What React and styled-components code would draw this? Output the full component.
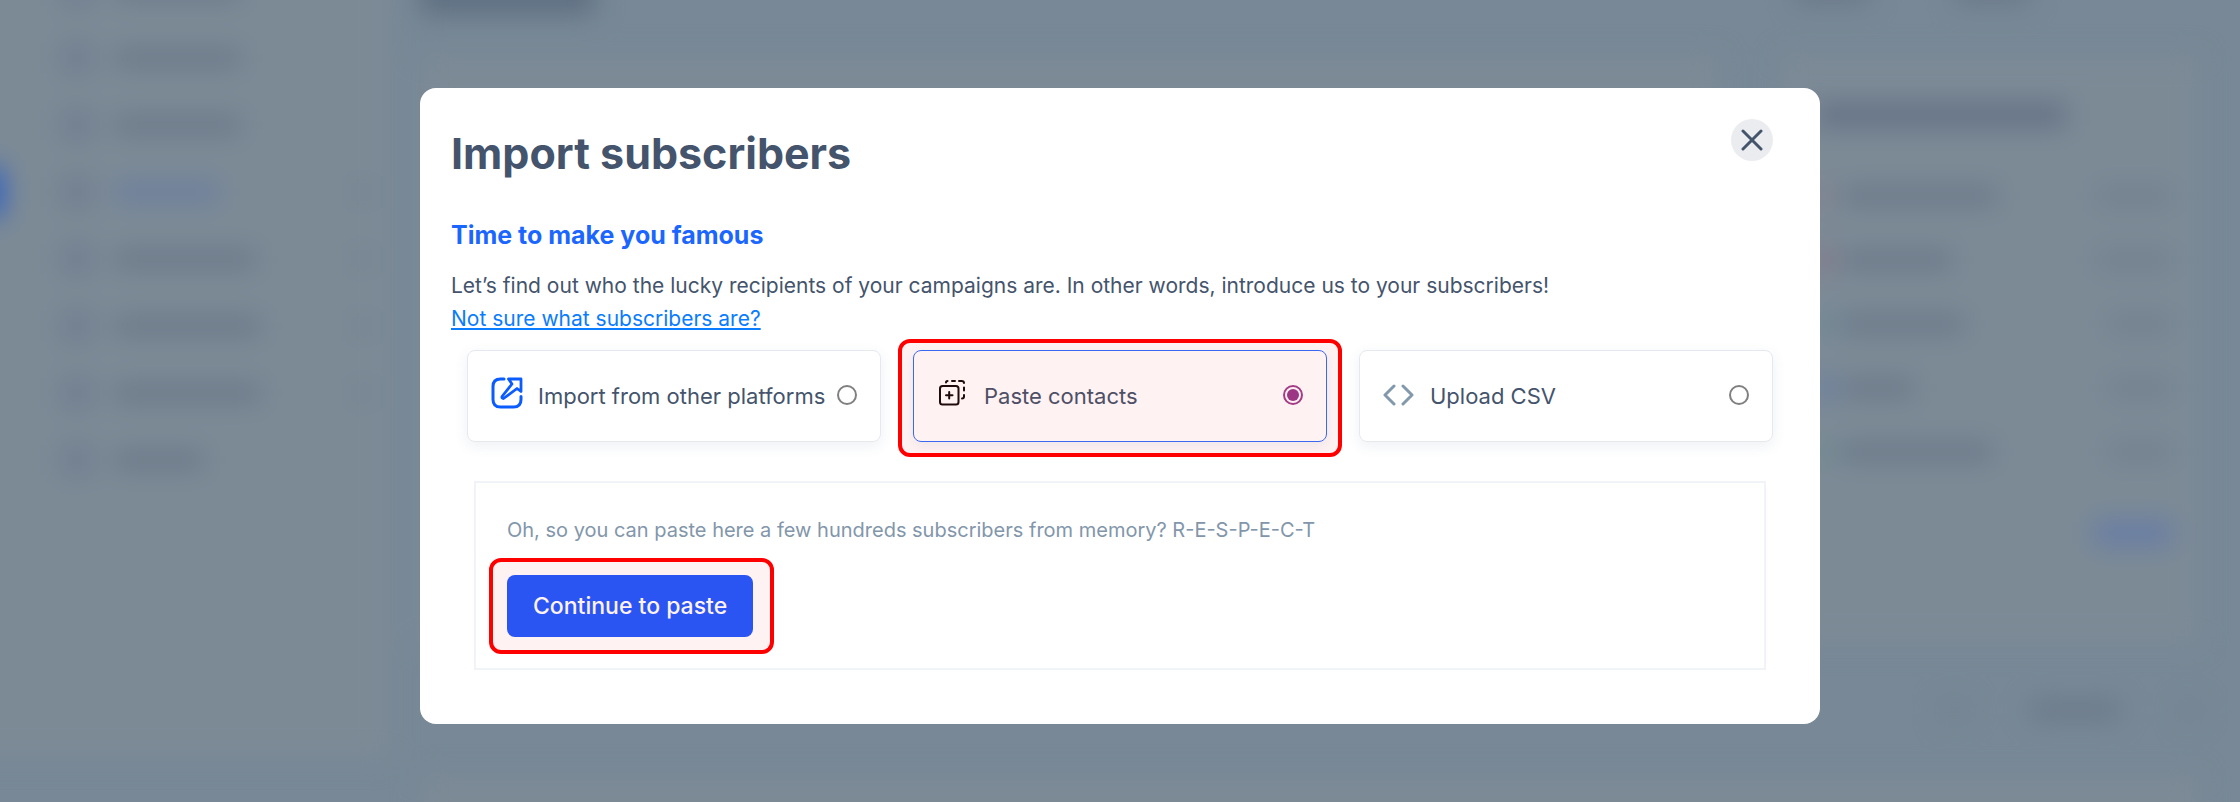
import { useState } from "react";
import styled, { createGlobalStyle } from "styled-components";

const menu = [
  { id: 1, width: 125 },
  { id: 2, width: 125 },
  { id: 3, width: 125 },
  { id: 4, width: 103, active: true, arrow: true },
  { id: 5, width: 140, arrow: true },
  { id: 6, width: 145, arrow: true },
  { id: 7, width: 145, arrow: true },
  { id: 8, width: 88 },
];

const stats = [
  { id: 1, color: "#85808a", width: 155, count: 76 },
  { id: 2, color: "#8c6f80", width: 110, count: 76 },
  { id: 3, color: "#6a8795", width: 122, count: 64 },
  { id: 4, color: "#6278a6", width: 72, count: 64 },
  { id: 5, color: "#6a8a8d", width: 150, count: 64 },
];

const ImportIcon = () => (
  <svg
    width="32"
    height="32"
    viewBox="0 0 32 32"
    fill="none"
    stroke="#0b5cff"
    strokeWidth="3"
    strokeLinecap="round"
    strokeLinejoin="round"
  >
    <path d="M13 2H9.500Q2 2 2 9.500V22.500Q2 30 9.500 30H22.500Q30 30 30 22.500V19.500" />
    <path d="M17.500 2H30V14.500L26 11.500L12.500 21.500Q10.500 21.500 11 19.500L21 7Z" strokeWidth="2.800" />
  </svg>
);

const PasteIcon = () => (
  <svg width="32" height="32" viewBox="0 0 32 32" fill="none" stroke="#140c0c" strokeWidth="2" strokeLinecap="round">
    <rect x="3" y="9" width="18.500" height="18.500" rx="2.500" />
    <path d="M12.200 15v6.500M9 18.200h6.500" />
    <path d="M9 5.500Q9 4 10.500 4M15 4h3M22 4h2.500Q27 4 27 6M27 10.500v3M27 18v1.500Q27 21.500 25 21.500" />
  </svg>
);

const CodeIcon = () => (
  <svg
    width="32"
    height="32"
    viewBox="0 0 32 32"
    fill="none"
    stroke="#8299ad"
    strokeWidth="3"
    strokeLinecap="round"
    strokeLinejoin="round"
  >
    <path d="M11 9L2 18L11 27M20 9L29 18L20 27" />
  </svg>
);

const options = [
  { id: "platforms", label: "Import from other platforms", icon: <ImportIcon /> },
  { id: "paste", label: "Paste contacts", icon: <PasteIcon /> },
  { id: "csv", label: "Upload CSV", icon: <CodeIcon /> },
];

const Background = () => (
  <Backdrop aria-hidden="true">
    <Sidebar>
      {menu.map(item => (
        <MenuItem key={item.id}>
          <Marker $active={item.active} />
          <MenuIcon />
          <Bar $width={item.width} $color={item.active && "#6b7d9e"} />
          {item.arrow && <Arrow />}
        </MenuItem>
      ))}
    </Sidebar>
    <Main>
      <TopBar>
        <Bar $width={175} $height={40} $color="#5f7082" />
        <Actions>
          <Bar $width={75} $height={28} />
          <Bar $width={75} $height={28} />
        </Actions>
      </TopBar>
      <Columns>
        <Card />
        <Card>
          <Bar $width={250} $height={24} $color="#637185" />
          {stats.map(stat => (
            <Stat key={stat.id}>
              <Bar $width={16} $color={stat.color} />
              <Bar $width={stat.width} />
              <Count $width={stat.count} $color="#728090" />
            </Stat>
          ))}
          <Stat>
            <Count $width={78} $height={24} $color="#667ca5" />
          </Stat>
        </Card>
      </Columns>
      <Pager>
        <Bar $width={30} $color="#748290" />
        <Bar $width={90} />
        <Bar $width={20} $color="#748290" />
      </Pager>
      <Card />
    </Main>
  </Backdrop>
);

const App = () => {
  const [selected, setSelected] = useState("paste");

  return (
    <Page>
      <GlobalStyle />
      <Background />
      <Modal role="dialog" aria-modal="true" aria-labelledby="modal-title">
        <Header>
          <h1 id="modal-title">Import subscribers</h1>
          <CloseButton type="button" aria-label="Close">
            <svg width="22" height="22" viewBox="0 0 22 22" stroke="#44546c" strokeWidth="3" strokeLinecap="round">
              <path d="M2 2L20 20M20 2L2 20" />
            </svg>
          </CloseButton>
        </Header>
        <Intro>
          <h2>Time to make you famous</h2>
          <p>
            Let’s find out who the lucky recipients of your campaigns are. In other words, introduce us to your
            subscribers!
          </p>
          <a href="#subscribers">Not sure what subscribers are?</a>
        </Intro>
        <Options>
          {options.map(option => (
            <Option key={option.id} $selected={selected === option.id}>
              {option.icon}
              <span>{option.label}</span>
              <input
                type="radio"
                name="import-type"
                value={option.id}
                checked={selected === option.id}
                onChange={() => setSelected(option.id)}
              />
              {option.id === "paste" && <OptionHighlight />}
            </Option>
          ))}
        </Options>
        <Panel>
          <p>Oh, so you can paste here a few hundreds subscribers from memory? R-E-S-P-E-C-T</p>
          <ButtonWrapper>
            <Continue type="button">Continue to paste</Continue>
            <ButtonHighlight />
          </ButtonWrapper>
        </Panel>
      </Modal>
    </Page>
  );
};

export default App;

/* ---------------------------- Styled Components --------------------------- */

const GlobalStyle = createGlobalStyle`
  * {
    box-sizing: border-box;
  }

  body {
    margin: 0;
    font-family: Inter, "Open Sans", sans-serif;
    color: #44546c;
  }

  h1, h2, p {
    margin: 0;
  }
`;

const Page = styled.div`
  position: relative;
  min-height: 100vh;
  padding: 88px 32px 77px;
  overflow: hidden;
  background: #788896;
`;

/* the blurred app that lies under the dialog */
const Backdrop = styled.div`
  position: absolute;
  inset: 0;
  display: flex;
  filter: blur(13px);
`;

const Sidebar = styled.div`
  flex: none;
  width: 390px;
  height: 802px;
  margin-top: -43px;
  background: #7c8a96;
  box-shadow: -60px 0 0 #7c8a96;
`;

const MenuItem = styled.div`
  display: flex;
  align-items: center;
  height: 67px;
`;

const Marker = styled.div`
  width: 4px;
  height: 36px;
  margin-right: 58px;
  background: ${({ $active }) => ($active ? "#2f5fc0" : "transparent")};
  box-shadow: ${({ $active }) => ($active ? "-12px 0 0 8px #2f5fc0" : "none")};
`;

const MenuIcon = styled.div`
  width: 30px;
  height: 30px;
  margin-right: 23px;
  background: #6f7d90;
`;

const Bar = styled.div`
  flex: none;
  width: ${({ $width }) => $width}px;
  height: ${({ $height }) => $height || 18}px;
  background: ${({ $color }) => $color || "#6a7889"};
`;

const Arrow = styled.div`
  width: 16px;
  height: 16px;
  margin: 0 20px 0 auto;
  background: #728090;
`;

const Main = styled.div`
  flex: 1;
  padding: 0 40px 0 30px;
`;

const TopBar = styled.div`
  display: flex;
  justify-content: space-between;
  height: 80px;
  margin-top: -25px;
`;

const Actions = styled.div`
  display: flex;
  gap: 85px;
  margin-right: 170px;
`;

const Columns = styled.div`
  display: grid;
  grid-template-columns: 1fr 420px;
  gap: 60px;
  height: 590px;
`;

const Card = styled.div`
  min-height: 100px;
  padding: 48px 28px 0 36px;
  background: #7c8a96;
`;

const Stat = styled.div`
  display: flex;
  align-items: center;
  gap: 10px;
  height: 64px;

  &:nth-child(2) {
    margin-top: 37px;
  }

  &:last-child {
    height: 98px;
  }
`;

const Count = styled(Bar)`
  margin-left: auto;
`;

const Pager = styled.div`
  display: flex;
  align-items: center;
  justify-content: flex-end;
  gap: 60px;
  height: 130px;
`;

const Modal = styled.div`
  position: relative;
  max-width: 1400px;
  margin: 0 auto;
  padding: 31px 31px 54px;
  border-radius: 16px;
  background: #fff;
`;

const Header = styled.div`
  display: flex;
  align-items: flex-start;
  justify-content: space-between;
  padding-right: 16px;

  h1 {
    font-size: 43px;
    line-height: 68px;
    font-weight: 700;
  }
`;

const CloseButton = styled.button`
  display: flex;
  align-items: center;
  justify-content: center;
  width: 42px;
  height: 42px;
  padding: 0;
  border: 0;
  border-radius: 50%;
  background: #ebecf0;
  cursor: pointer;
`;

const Intro = styled.div`
  margin-top: 32px;
  font-size: 21px;
  line-height: 33px;

  h2 {
    margin-bottom: 17px;
    font-size: 25px;
    line-height: 33px;
    font-weight: 700;
    color: #1a66ff;
  }

  a {
    color: #0a7cff;
    text-decoration-thickness: 2px;
    text-underline-offset: 2px;
  }
`;

const Options = styled.div`
  display: grid;
  grid-template-columns: repeat(3, 1fr);
  gap: 32px;
  margin-top: 15px;
  padding: 0 16px;
`;

const Option = styled.label`
  position: relative;
  display: flex;
  align-items: center;
  height: 92px;
  padding: 0 23px;
  border: 1px solid ${({ $selected }) => ($selected ? "#2f6fff" : "#e6e8f0")};
  border-radius: 8px;
  box-shadow: 0 4px 14px rgba(60, 90, 130, 0.09);
  font-size: 22px;
  line-height: 33px;
  cursor: pointer;

  svg {
    flex: none;
    margin: 0 15px 6px 0;
  }

  input {
    appearance: none;
    flex: none;
    width: 20px;
    height: 20px;
    margin: 0 0 2px auto;
    padding: 2px;
    border: 2px solid #808080;
    border-radius: 50%;
    background-clip: content-box;
  }

  input:checked {
    border-color: #a0408f;
    background-color: #96388c;
  }
`;

const Highlight = styled.div`
  position: absolute;
  border: 4px solid #ff0000;
  border-radius: 12px;
  background: rgba(255, 0, 0, 0.05);
  pointer-events: none;
`;

const OptionHighlight = styled(Highlight)`
  inset: -12px -16px -16px;
`;

const ButtonHighlight = styled(Highlight)`
  inset: -17px -21px -17px -18px;
`;

const Panel = styled.div`
  margin: 39px 23px 0;
  padding: 31px 31px;
  border: 2px solid #f0f4f9;

  p {
    margin-bottom: 28px;
    font-size: 20px;
    line-height: 33px;
    color: #8296ab;
  }
`;

const ButtonWrapper = styled.div`
  position: relative;
  width: fit-content;
`;

const Continue = styled.button`
  display: block;
  height: 62px;
  padding: 0 26px;
  border: 0;
  border-radius: 8px;
  background: #1f5aff;
  font-family: inherit;
  font-size: 23px;
  font-weight: 500;
  color: #fff;
  cursor: pointer;
`;
